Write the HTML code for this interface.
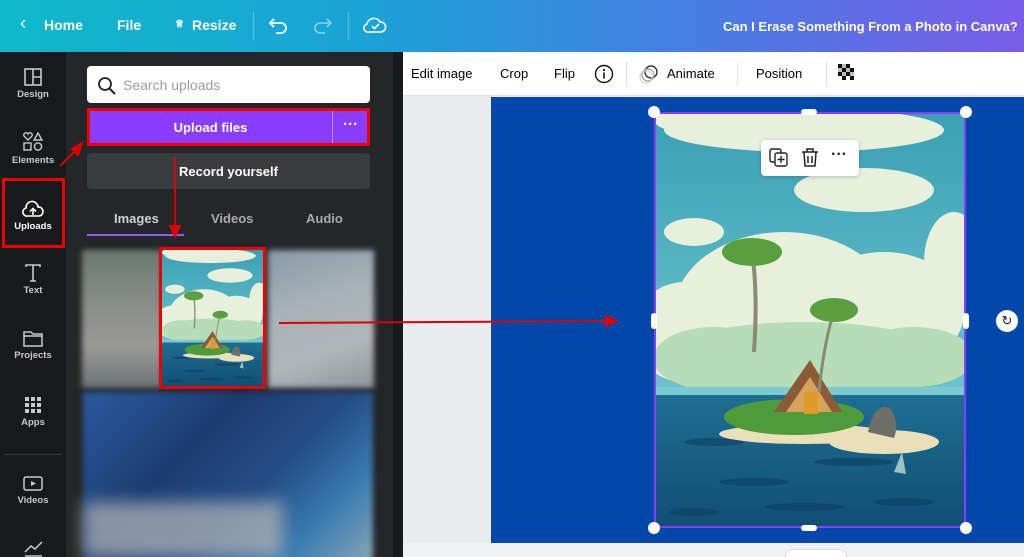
<!DOCTYPE html>
<html><head><meta charset="utf-8"><style>
*{margin:0;padding:0;box-sizing:border-box}
html,body{width:1024px;height:557px;overflow:hidden}
body{position:relative;font-family:"Liberation Sans",sans-serif;background:#ebecf0}
.abs{position:absolute}
.top{left:0;top:0;width:1024px;height:52px;background:linear-gradient(90deg,#10b9c9 0%,#1aa3d6 35%,#4a7be3 70%,#7a5de8 100%);color:#fff;font-weight:bold;font-size:14px}
.top span{position:absolute;top:17px}
.side{left:0;top:52px;width:66px;height:505px;background:#18191b;overflow:hidden}
.si{position:absolute;left:0;width:66px;text-align:center;color:#c8c9cc;font-size:9.5px;font-weight:bold}
.si svg{display:block;margin:0 auto 3px}
.panel{left:66px;top:52px;width:327px;height:505px;background:#252627;overflow:hidden}
</style></head><body>
<div class="abs top">
<span style="left:20px;font-weight:normal;font-size:18px;top:13px">&#8249;</span>
<span style="left:44px">Home</span><span style="left:117px">File</span>
<span style="left:175px;font-size:10px;top:19px">&#9813;</span><span style="left:192px">Resize</span>
<div class="abs" style="left:253px;top:12px;width:1px;height:28px;background:rgba(255,255,255,.3)"></div>
<svg class="abs" style="left:268px;top:15px" width="22" height="20" viewBox="0 0 22 20"><path d="M6 4 L2 8 L6 12 M2 8 H13 A5 5 0 0 1 13 18 H8" fill="none" stroke="#fff" stroke-width="1.8"/></svg>
<svg class="abs" style="left:311px;top:15px" width="22" height="20" viewBox="0 0 22 20"><path d="M16 4 L20 8 L16 12 M20 8 H9 A5 5 0 0 0 9 18 H14" fill="none" stroke="rgba(255,255,255,.45)" stroke-width="1.8"/></svg>
<div class="abs" style="left:348px;top:12px;width:1px;height:28px;background:rgba(255,255,255,.3)"></div>
<svg class="abs" style="left:363px;top:14px" width="24" height="22" viewBox="0 0 24 22"><path d="M6 18 H18 A5 5 0 0 0 17 8 A7 7 0 0 0 4 10 A4 4 0 0 0 6 18Z M9 12 L11.5 14.5 L16 10" fill="none" stroke="#fff" stroke-width="1.6"/></svg>
<span style="left:723px;font-size:13px;top:19px">Can I Erase Something From a Photo in Canva?</span>
</div>
<div class="abs side">
<div class="si" style="top:16px"><svg width="18" height="18"><rect x="1" y="1" width="16" height="16" fill="none" stroke="#c8c9cc" stroke-width="1.6"/><path d="M9 1V17M9 9H17" stroke="#c8c9cc" stroke-width="1.6"/></svg>Design</div>
<div class="si" style="top:80px"><svg width="20" height="20"><path d="M5 8 L1 4 A2 2 0 0 1 5 2 A2 2 0 0 1 9 4Z" fill="none" stroke="#c8c9cc" stroke-width="1.4"/><path d="M15 1 L19 8 H11Z" fill="none" stroke="#c8c9cc" stroke-width="1.4"/><rect x="1" y="11" width="7" height="7" fill="none" stroke="#c8c9cc" stroke-width="1.4"/><circle cx="15" cy="14.5" r="3.6" fill="none" stroke="#c8c9cc" stroke-width="1.4"/></svg>Elements</div>
<div class="si" style="top:148px;color:#fff"><svg width="22" height="18"><path d="M6 16 H17 A4.5 4.5 0 0 0 16 7 A6 6 0 0 0 4 8 A4 4 0 0 0 6 16Z M11 15 V9 M8 11.5 L11 8.5 L14 11.5" fill="none" stroke="#fff" stroke-width="1.6"/></svg>Uploads</div>
<div class="abs" style="left:2px;top:126px;width:63px;height:70px;border:3px solid #e00"></div>
<div class="si" style="top:212px"><svg width="18" height="18"><path d="M2 3 V1 H16 V3 M9 1 V17 M6 17 H12" fill="none" stroke="#c8c9cc" stroke-width="1.6"/></svg>Text</div>
<div class="si" style="top:278px"><svg width="20" height="17"><path d="M1 2 H8 L10 4 H19 V16 H1Z M1 6 H19" fill="none" stroke="#c8c9cc" stroke-width="1.5"/></svg>Projects</div>
<div class="si" style="top:344px"><svg width="18" height="18"><g fill="#c8c9cc"><rect x="1" y="1" width="4" height="4"/><rect x="7" y="1" width="4" height="4"/><rect x="13" y="1" width="4" height="4"/><rect x="1" y="7" width="4" height="4"/><rect x="7" y="7" width="4" height="4"/><rect x="13" y="7" width="4" height="4"/><rect x="1" y="13" width="4" height="4"/><rect x="7" y="13" width="4" height="4"/><rect x="13" y="13" width="4" height="4"/></g></svg>Apps</div>
<div class="abs" style="left:4px;top:402px;width:58px;height:1px;background:#3a3b3e"></div>
<div class="si" style="top:424px"><svg width="20" height="16"><rect x="1" y="1" width="18" height="13" rx="2" fill="none" stroke="#c8c9cc" stroke-width="1.5"/><path d="M8 5 L13 7.5 L8 10Z" fill="#c8c9cc"/></svg>Videos</div>
<svg class="abs" style="left:24px;top:488px" width="20" height="17"><path d="M1 12 L7 6 L11 9 L18 2 M1 16 H18" fill="none" stroke="#c8c9cc" stroke-width="1.5"/></svg>
</div>
<div class="abs panel">
<div class="abs" style="left:21px;top:14px;width:283px;height:37px;background:#fff;border-radius:4px"></div>
<svg class="abs" style="left:31px;top:24px" width="20" height="20"><circle cx="8" cy="8" r="6" fill="none" stroke="#222" stroke-width="1.8"/><path d="M12.5 12.5 L18 18" stroke="#222" stroke-width="2"/></svg>
<div class="abs" style="left:57px;top:25px;font-size:14px;color:#9b9ca0">Search uploads</div>
<div class="abs" style="left:21px;top:56px;width:283px;height:38px;background:#8b3dff;border:3px solid #e00"></div>
<div class="abs" style="left:21px;top:68px;width:247px;text-align:center;color:#fff;font-weight:bold;font-size:13px">Upload files</div>
<div class="abs" style="left:266px;top:59px;width:1px;height:32px;background:rgba(255,255,255,.4)"></div>
<div class="abs" style="left:277px;top:64px;color:#fff;font-weight:bold;font-size:15px">&middot;&middot;&middot;</div>
<div class="abs" style="left:21px;top:101px;width:283px;height:36px;background:#3b3c3f;border-radius:4px;color:#fff;font-weight:bold;font-size:13px;text-align:center;line-height:38px">Record yourself</div>
<div class="abs" style="left:48px;top:159px;color:#d0d1d4;font-weight:bold;font-size:13px">Images</div>
<div class="abs" style="left:145px;top:159px;color:#a9aaae;font-weight:bold;font-size:13px">Videos</div>
<div class="abs" style="left:240px;top:159px;color:#a9aaae;font-weight:bold;font-size:13px">Audio</div>
<div class="abs" style="left:21px;top:182px;width:97px;height:2px;background:#8b5cf6"></div>
<div class="abs" style="left:16px;top:198px;width:80px;height:138px;background:linear-gradient(180deg,#6a7a70,#8a8e88 40%,#9a9a98 70%,#6c7276);filter:blur(3px)"></div>
<div class="abs" style="left:202px;top:198px;width:106px;height:138px;background:linear-gradient(160deg,#8a9aa8,#a8b2b8 40%,#b0b6ba 70%,#8f959a);filter:blur(3px)"></div>
<div class="abs" style="left:17px;top:340px;width:290px;height:170px;background:linear-gradient(135deg,#2a5aa0 0%,#1c3c70 35%,#254e86 60%,#3a7cb0 80%,#8aa6b8 100%);filter:blur(3px)"></div>
<div class="abs" style="left:17px;top:450px;width:200px;height:55px;background:#b7b8ba;filter:blur(8px);opacity:.7"></div>
<div class="abs" style="left:93px;top:195px;width:107px;height:142px;border:3px solid #e00;background:#1c2a3a;overflow:hidden">
<svg width="101" height="136" viewBox="0 0 312 416" preserveAspectRatio="none"><use href="#isl"/></svg></div>
</div>
<div class="abs" style="left:393px;top:52px;width:10px;height:505px;background:#18191b"></div>
<div class="abs" style="left:393px;top:290px;width:12px;height:70px;background:#18191b;border-radius:0 8px 8px 0"></div>
<div class="abs" style="left:403px;top:52px;width:621px;height:44px;background:#fff;border-bottom:1px solid #dfe1e5;font-size:13px;color:#0e1318"></div>
<div class="abs" style="left:411px;top:66px;font-size:13px">Edit image</div>
<div class="abs" style="left:500px;top:66px;font-size:13px">Crop</div>
<div class="abs" style="left:554px;top:66px;font-size:13px">Flip</div>
<svg class="abs" style="left:594px;top:64px" width="20" height="20"><circle cx="10" cy="10" r="8.5" fill="none" stroke="#0e1318" stroke-width="1.4"/><path d="M10 8.5V14.5" stroke="#0e1318" stroke-width="1.6"/><circle cx="10" cy="6" r="1.1" fill="#0e1318"/></svg>
<div class="abs" style="left:626px;top:62px;width:1px;height:24px;background:#e0e0e0"></div>
<svg class="abs" style="left:638px;top:63px" width="22" height="22"><circle cx="13" cy="9" r="6" fill="none" stroke="#333" stroke-width="1.4"/><circle cx="10" cy="12" r="6" fill="none" stroke="#999" stroke-width="1.2"/><circle cx="8" cy="14" r="6" fill="none" stroke="#ccc" stroke-width="1"/></svg>
<div class="abs" style="left:667px;top:66px;font-size:13px">Animate</div>
<div class="abs" style="left:737px;top:62px;width:1px;height:24px;background:#e0e0e0"></div>
<div class="abs" style="left:756px;top:66px;font-size:13px">Position</div>
<div class="abs" style="left:826px;top:62px;width:1px;height:24px;background:#e0e0e0"></div>
<svg class="abs" style="left:838px;top:64px" width="18" height="18"><g fill="#111"><rect x="0" y="0" width="4" height="4"/><rect x="8" y="0" width="4" height="4"/><rect x="4" y="4" width="4" height="4"/><rect x="12" y="4" width="4" height="4"/><rect x="0" y="8" width="4" height="4"/><rect x="8" y="8" width="4" height="4"/><rect x="4" y="12" width="4" height="4"/><rect x="12" y="12" width="4" height="4"/></g><g fill="#bbb"><rect x="4" y="0" width="4" height="4"/><rect x="0" y="4" width="4" height="4"/><rect x="8" y="4" width="4" height="4"/><rect x="4" y="8" width="4" height="4"/><rect x="12" y="8" width="4" height="4"/></g></svg>
<div class="abs" style="left:403px;top:97px;width:88px;height:446px;background:#ebecf0"></div>
<div class="abs" style="left:491px;top:97px;width:533px;height:446px;background:#0049ab"></div>
<div class="abs" style="left:403px;top:543px;width:621px;height:14px;background:#f0f1f3"></div>
<div class="abs" style="left:785px;top:549px;width:62px;height:14px;background:#fff;border-radius:8px;border:1px solid #ddd"></div>
<svg class="abs" style="left:654px;top:112px" width="312" height="416" viewBox="0 0 312 416">
<defs><linearGradient id="sky" x1="0" y1="0" x2="0" y2="1"><stop offset="0" stop-color="#3aa0b4"/><stop offset="1" stop-color="#6cc4cc"/></linearGradient>
<linearGradient id="sea" x1="0" y1="0" x2="0" y2="1"><stop offset="0" stop-color="#1e6f92"/><stop offset="1" stop-color="#114e74"/></linearGradient></defs>
<g id="isl">
<rect width="312" height="283" fill="url(#sky)"/>
<g fill="#e6f0dc"><ellipse cx="150" cy="18" rx="140" ry="22"/><ellipse cx="60" cy="8" rx="60" ry="16"/><ellipse cx="210" cy="78" rx="70" ry="22"/><ellipse cx="40" cy="120" rx="30" ry="14"/><ellipse cx="130" cy="200" rx="110" ry="80"/><ellipse cx="230" cy="200" rx="80" ry="60"/><ellipse cx="30" cy="220" rx="50" ry="50"/><ellipse cx="300" cy="150" rx="30" ry="50"/></g>
<g fill="#b7dcb8"><ellipse cx="150" cy="250" rx="150" ry="40"/><ellipse cx="60" cy="245" rx="60" ry="30"/><ellipse cx="260" cy="245" rx="60" ry="30"/></g>
<rect y="275" width="312" height="8" fill="#7ccad0"/>
<rect y="283" width="312" height="133" fill="url(#sea)"/>
<g fill="#0d3f62" opacity=".6"><ellipse cx="60" cy="330" rx="30" ry="4"/><ellipse cx="200" cy="350" rx="40" ry="4"/><ellipse cx="100" cy="370" rx="35" ry="4"/><ellipse cx="250" cy="390" rx="30" ry="4"/><ellipse cx="150" cy="395" rx="40" ry="4"/><ellipse cx="40" cy="400" rx="25" ry="4"/></g>
<ellipse cx="150" cy="322" rx="85" ry="10" fill="#e9dfb8"/><ellipse cx="230" cy="330" rx="55" ry="12" fill="#e9dfb8"/>
<ellipse cx="140" cy="305" rx="70" ry="18" fill="#4f9a3a"/>
<path d="M120 300 L156 248 L188 300Z" fill="#8a5b36"/><path d="M132 300 L156 265 L178 300Z" fill="#d6a35a"/><rect x="150" y="280" width="14" height="22" fill="#e09a2a"/>
<path d="M214 320 Q220 290 236 296 Q246 310 240 326Z" fill="#6e6e68"/>
<path d="M100 240 Q104 180 98 140" stroke="#8a8a70" stroke-width="4" fill="none"/><ellipse cx="98" cy="140" rx="30" ry="14" fill="#5aa040"/>
<path d="M165 280 Q170 230 180 200" stroke="#8a8a70" stroke-width="3" fill="none"/><ellipse cx="180" cy="198" rx="24" ry="12" fill="#5aa040"/>
<path d="M240 360 L248 340 L252 362Z" fill="#9cc2c4"/>
</g></svg>
<div class="abs" style="left:654px;top:112px;width:312px;height:416px;border:2px solid #8b3dff"></div>
<div class="abs" style="left:648px;top:106px;width:12px;height:12px;border-radius:50%;background:#fff"></div>
<div class="abs" style="left:960px;top:106px;width:12px;height:12px;border-radius:50%;background:#fff"></div>
<div class="abs" style="left:648px;top:522px;width:12px;height:12px;border-radius:50%;background:#fff"></div>
<div class="abs" style="left:960px;top:522px;width:12px;height:12px;border-radius:50%;background:#fff"></div>
<div class="abs" style="left:801px;top:109px;width:16px;height:6px;border-radius:3px;background:#fff"></div>
<div class="abs" style="left:801px;top:525px;width:16px;height:6px;border-radius:3px;background:#fff"></div>
<div class="abs" style="left:651px;top:313px;width:6px;height:16px;border-radius:3px;background:#fff"></div>
<div class="abs" style="left:963px;top:313px;width:6px;height:16px;border-radius:3px;background:#fff"></div>
<div class="abs" style="left:996px;top:310px;width:22px;height:22px;border-radius:50%;background:#fff;font-size:13px;text-align:center;line-height:22px;color:#222">&#8635;</div>
<div class="abs" style="left:761px;top:140px;width:98px;height:36px;background:#fff;border-radius:4px;box-shadow:0 1px 4px rgba(0,0,0,.2)"></div>
<svg class="abs" style="left:769px;top:148px" width="20" height="20"><rect x="1" y="1" width="11" height="13" rx="2" fill="none" stroke="#222" stroke-width="1.4"/><rect x="6" y="5" width="12" height="13" rx="2" fill="#fff" stroke="#222" stroke-width="1.4"/><path d="M12 8V15M8.5 11.5H15.5" stroke="#222" stroke-width="1.4"/></svg>
<svg class="abs" style="left:801px;top:148px" width="18" height="20"><path d="M1 4H17M6 4V1H12V4M3 4 L4 18 H14 L15 4 M7 8V15M11 8V15" fill="none" stroke="#222" stroke-width="1.5"/></svg>
<div class="abs" style="left:831px;top:146px;font-weight:bold;font-size:16px;color:#222">&middot;&middot;&middot;</div>
<svg class="abs" style="left:0;top:0" width="1024" height="557">
<g stroke="#d00" stroke-width="2" fill="#d00">
<line x1="60" y1="166" x2="76" y2="150"/><path d="M82 143 L72 149 L78 155Z"/>
<line x1="175" y1="157" x2="175" y2="228"/><path d="M170 226 L175 236 L180 226Z"/>
<line x1="279" y1="323" x2="608" y2="321"/><path d="M606 316 L617 321 L606 326Z"/>
</g></svg>
</body></html>
